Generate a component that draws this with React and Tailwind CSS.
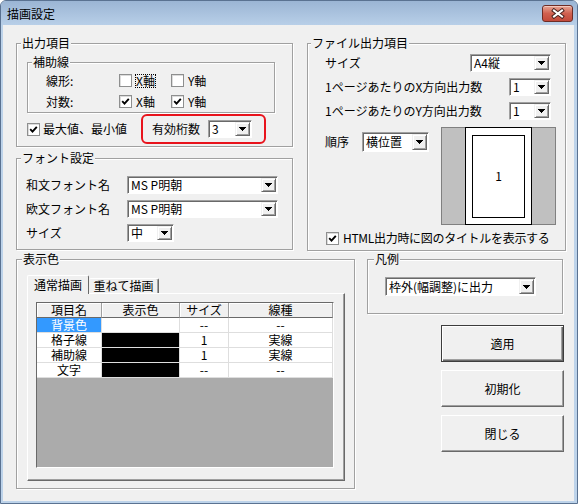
// Classic Windows "描画設定" dialog.

function Arrow() {
  return (
    <svg width="7" height="4" viewBox="0 0 7 4" shapeRendering="crispEdges">
      <path d="M0 0h7L3.5 4z" fill="#000" />
    </svg>
  );
}

function Combo({ value, className = '' }) {
  return (
    <div
      className={`flex h-[18px] items-stretch border border-b-white border-l-[#a0a0a0] border-r-white border-t-[#a0a0a0] bg-white shadow-[inset_1px_1px_0_#696969] ${className}`}
    >
      <span className="flex flex-1 items-center overflow-hidden whitespace-nowrap pl-[3px]">{value}</span>
      <span className="m-px flex w-[15px] items-center justify-center border border-b-[#696969] border-l-[#f0f0f0] border-r-[#696969] border-t-[#f0f0f0] bg-[#f0f0f0] shadow-[inset_1px_1px_0_#fff,inset_-1px_-1px_0_#a0a0a0]">
        <Arrow />
      </span>
    </div>
  );
}

function Check({ checked }) {
  return (
    <span className="flex h-[13px] w-[13px] shrink-0 items-center justify-center border border-[#8e8f8f] bg-white shadow-[inset_1px_1px_0_#dcdcdc]">
      {checked && (
        <svg width="9" height="9" viewBox="0 0 9 9">
          <path d="M1.2 4.2 3.5 6.6 7.8 1.8" fill="none" stroke="#000" strokeWidth="1.9" />
        </svg>
      )}
    </span>
  );
}

function Group({ label, className = '', lx = 'left-[4px]', children }) {
  return (
    <div className={`relative border border-[#a0a0a0] shadow-[inset_1px_1px_0_#fff,1px_1px_0_#fff] ${className}`}>
      <span className={`absolute -top-[8px] ${lx} bg-[#f0f0f0] px-px leading-[14px]`}>{label}</span>
      {children}
    </div>
  );
}

function Button({ children, isDefault }) {
  return (
    <button
      className={
        isDefault
          ? 'h-[37px] w-[123px] border border-[#3c3c3c] bg-[#f0f0f0] shadow-[inset_1px_1px_0_#fff,inset_-1px_-1px_0_#696969,inset_-2px_-2px_0_#a0a0a0]'
          : 'h-[37px] w-[123px] border border-b-[#696969] border-l-white border-r-[#696969] border-t-white bg-[#f0f0f0] shadow-[inset_-1px_-1px_0_#a0a0a0]'
      }
    >
      {children}
    </button>
  );
}

const rows = [
  { name: '背景色', color: null, size: '--', line: '--', selected: true },
  { name: '格子線', color: '#000', size: '1', line: '実線' },
  { name: '補助線', color: '#000', size: '1', line: '実線' },
  { name: '文字', color: '#000', size: '--', line: '--' },
];

function ColorTable() {
  return (
    <div className="flex h-[166px] w-[298px] flex-col border border-b-white border-l-[#696969] border-r-white border-t-[#696969] bg-[#ababab] text-center">
      <div className="grid grid-cols-[65px_78px_49px_104px] auto-rows-[15px] leading-[14px]">
        {['項目名', '表示色', 'サイズ', '線種'].map((h) => (
          <div
            key={h}
            className="border-b border-r border-b-[#696969] border-r-[#a0a0a0] bg-[#f0f0f0] shadow-[inset_1px_1px_0_#fff]"
          >
            {h}
          </div>
        ))}
        {rows.map((r) => [
          <div
            key={r.name + 'n'}
            className={`border-b border-r border-[#dedede] ${r.selected ? 'bg-[#3399ff] text-white' : 'bg-white'}`}
          >
            {r.name}
          </div>,
          <div key={r.name + 'c'} className="border-b border-r border-[#dedede] bg-white">
            {r.color && <div className="h-full w-full bg-black" />}
          </div>,
          <div key={r.name + 's'} className="border-b border-r border-[#dedede] bg-white">
            {r.size}
          </div>,
          <div key={r.name + 'l'} className="border-b border-r border-[#dedede] bg-white">
            {r.line}
          </div>,
        ])}
      </div>
    </div>
  );
}

export default function App() {
  return (
    <div className="font-['Noto_Sans_CJK_JP',sans-serif] text-[12px] leading-[14px] text-black">
      <div className="flex h-[504px] w-[578px] flex-col overflow-hidden rounded-t-[6px] border border-[#5a7291] bg-[#bdd3ea]">
        {/* title bar */}
        <div className="flex h-[24px] shrink-0 items-start bg-linear-to-b from-[#9bb5d4] to-[#b8cfe8] pl-[6px] pr-[4px]">
          <span className="mt-[6px]">描画設定</span>
          <div className="ml-auto mt-[4px] flex h-[17px] w-[31px] items-center justify-center rounded-[3px] border border-[#6e2c25] bg-linear-to-b from-[#e6a595] via-[#d0604f] to-[#c3493a] shadow-[inset_0_1px_0_#f3c8bd]">
            <svg width="14" height="11" viewBox="0 0 14 11">
              <path d="M3 2.5 11 8.5M11 2.5 3 8.5" stroke="#4a2420" strokeWidth="4" strokeLinecap="square" />
              <path d="M3 2.5 11 8.5M11 2.5 3 8.5" stroke="#fff" strokeWidth="2" strokeLinecap="square" />
            </svg>
          </div>
        </div>

        {/* client area */}
        <div className="mb-[2px] ml-[2px] mr-[3px] flex-1 bg-[#f0f0f0] pl-[13px] pt-[18px]">
          <div className="flex gap-[14px]">
            <div className="flex w-[277px] flex-col">
              <Group label="出力項目" className="h-[104px]">
                <Group label="補助線" className="ml-[10px] mt-[18px] h-[51px] w-[248px]">
                  <div className="pl-[18px] pt-[7px]">
                    <div className="flex h-[21px] items-center">
                      <span className="w-[73px]">線形:</span>
                      <label className="flex w-[52px] items-center gap-[4px]">
                        <Check />
                        <span className="-mx-px border border-dotted border-black leading-[12px]">X軸</span>
                      </label>
                      <label className="flex items-center gap-[4px]">
                        <Check />
                        <span>Y軸</span>
                      </label>
                    </div>
                    <div className="flex h-[21px] items-center">
                      <span className="w-[73px]">対数:</span>
                      <label className="flex w-[52px] items-center gap-[4px]">
                        <Check checked />
                        <span>X軸</span>
                      </label>
                      <label className="flex items-center gap-[4px]">
                        <Check checked />
                        <span>Y軸</span>
                      </label>
                    </div>
                  </div>
                </Group>
                <div className="ml-[10px] mt-px flex h-[30px] items-center">
                  <label className="flex w-[114px] items-center gap-[3px]">
                    <Check checked />
                    <span>最大値、最小値</span>
                  </label>
                  <div className="flex h-[30px] w-[125px] items-center gap-[8px] rounded-[6px] border-2 border-[#e8131c] pl-[9px]">
                    <span>有効桁数</span>
                    <Combo value="3" className="w-[44px]" />
                  </div>
                </div>
              </Group>

              <Group label="フォント設定" className="mt-[11px] h-[92px]">
                <div className="flex flex-col gap-[6px] pl-[9px] pt-[17px]">
                  <div className="flex h-[18px] items-center">
                    <span className="w-[101px]">和文フォント名</span>
                    <Combo value="MS P明朝" className="w-[151px]" />
                  </div>
                  <div className="flex h-[18px] items-center">
                    <span className="w-[101px]">欧文フォント名</span>
                    <Combo value="MS P明朝" className="w-[151px]" />
                  </div>
                  <div className="flex h-[18px] items-center">
                    <span className="w-[101px]">サイズ</span>
                    <Combo value="中" className="w-[47px]" />
                  </div>
                </div>
              </Group>
            </div>

            <Group label="ファイル出力項目" lx="left-[3px]" className="h-[208px] w-[259px]">
              <div className="flex flex-col pl-[17px] pr-[14px] pt-[10px]">
                <div className="flex h-[18px] items-center">
                  <span>サイズ</span>
                  <Combo value="A4縦" className="ml-auto w-[81px]" />
                </div>
                <div className="mt-[6px] flex h-[18px] items-center">
                  <span>1ページあたりのX方向出力数</span>
                  <Combo value="1" className="ml-auto w-[42px]" />
                </div>
                <div className="mt-[6px] flex h-[18px] items-center">
                  <span>1ページあたりのY方向出力数</span>
                  <Combo value="1" className="ml-auto w-[42px]" />
                </div>
                <div className="-mr-[5px] mt-[7px] flex">
                  <div className="mt-[5px] flex h-[20px] items-center self-start">
                    <span className="w-[37px]">順序</span>
                    <Combo value="横位置" className="h-[20px] w-[67px]" />
                  </div>
                  <div className="ml-auto flex h-[98px] w-[115px] justify-center border border-[#808080] bg-[#c0c0c0]">
                    <div className="-my-px flex w-[67px] items-center justify-center border border-black bg-white">
                      <div className="flex h-[83px] w-[53px] items-center justify-center border border-black">1</div>
                    </div>
                  </div>
                </div>
                <label className="mt-[5px] flex h-[16px] items-center gap-[4px] whitespace-nowrap pl-px">
                  <Check checked />
                  <span className="tracking-[-0.3px]">HTML出力時に図のタイトルを表示する</span>
                </label>
              </div>
            </Group>
          </div>

          <div className="mt-[8px] flex gap-[12px]">
            <Group label="表示色" lx="left-[5px]" className="h-[230px] w-[339px]">
              <div className="ml-[10px] mt-[15px] flex h-[18px] items-end">
                <div className="relative z-10 -mb-px flex h-[19px] w-[62px] items-center justify-center rounded-t-[2px] border-l border-r border-t border-l-white border-r-[#696969] border-t-white bg-[#f0f0f0]">
                  通常描画
                </div>
                <div className="flex h-[15px] w-[70px] items-center justify-center rounded-t-[2px] border-r border-t border-r-[#696969] border-t-white bg-[#f0f0f0] shadow-[inset_-1px_0_0_#a0a0a0]">
                  重ねて描画
                </div>
              </div>
              <div className="ml-[10px] h-[188px] w-[318px] border border-b-[#696969] border-l-white border-r-[#696969] border-t-white pl-[8px] pt-[8px] shadow-[inset_-1px_-1px_0_#a0a0a0]">
                <ColorTable />
              </div>
            </Group>

            <div className="flex flex-col">
              <Group label="凡例" lx="left-[6px]" className="h-[55px] w-[196px]">
                <Combo value="枠外(幅調整)に出力" className="ml-[17px] mt-[17px] h-[19px] w-[151px]" />
              </Group>
              <div className="ml-[74px] mt-[11px] flex flex-col gap-[8px]">
                <Button isDefault>適用</Button>
                <Button>初期化</Button>
                <Button>閉じる</Button>
              </div>
            </div>
          </div>
        </div>
      </div>
    </div>
  );
}
